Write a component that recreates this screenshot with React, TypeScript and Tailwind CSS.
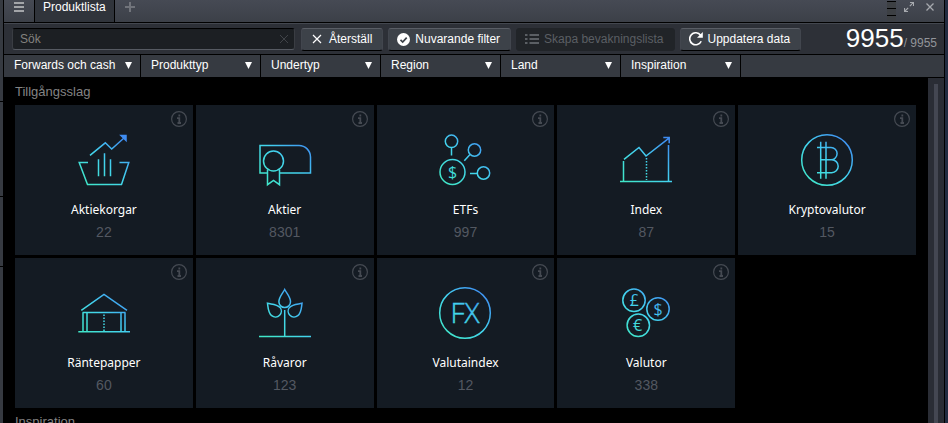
import { useState, type ReactNode } from "react";

const glyph = {
  fontFamily: '"Open Sans", "Noto Sans", sans-serif',
  fill: "url(#glow)",
  stroke: "none",
  textAnchor: "middle" as const,
};

const BasketIcon = (
  <>
    <path d="M14 24.3 29.3 11.8 35.7 18 48 7" />
    <path d="M45 4.5h5v5z" fill="url(#glow)" />
    <path d="M12 31.5H3.2l8.3 22h34l7.3-22h-9.3M22.5 28.3v17M28.5 22.3v23M34.5 28.3v17" />
  </>
);

const CertificateIcon = (
  <>
    <path d="M10.5 42H3V14.5h39a11.5 11.5 0 0 1 11.5 11.5v16H23" />
    <circle cx="16.5" cy="30" r="10" />
    <path d="M10.5 38.7v15l6-4.2 6 4.2v-15" />
  </>
);

const NetworkIcon = (
  <>
    <circle cx="15.5" cy="41" r="12.5" />
    <circle cx="14.5" cy="10.3" r="6.2" />
    <circle cx="37.5" cy="19" r="6.2" />
    <circle cx="46.5" cy="42" r="6.2" />
    <path d="M14.5 17v7.5M33 23.5l-5.7 6.3M33 42.5h7" />
    <text x="15.5" y="46.8" fontSize="16" style={glyph}>$</text>
  </>
);

const IndexIcon = (
  <>
    <path d="M2 50.5h52M5.5 30v20M50.5 14v36" />
    <path d="M6 28.3 21 16.5 28 25 51 7.2M45.3 6.5h5.9v5.8" />
    <path d="M28.5 27v22" strokeDasharray="1.5 1.5" />
  </>
);

const CryptoIcon = (
  <>
    <circle cx="28" cy="29" r="25.3" />
    <path d="M21.7 10.7v37M27 10.7v37M18 16.5h14a6.1 6.1 0 0 1 0 12.2H21.7M32 28.7h.7a6.5 6.5 0 0 1 0 13H18" />
  </>
);

const BankIcon = (
  <>
    <path d="M5.3 26.3 28 10.5 51 26.3" />
    <path d="M6.5 28.5h43M2.3 47.7H54M7 28.5v19M11 28.5v19M45 28.5v19M49 28.5v19" />
    <path d="M28 30.5v17" strokeDasharray="1.5 1.5" />
  </>
);

const PlantIcon = (
  <>
    <path d="M2 52.5h52M27.7 26v26" />
    <path d="M27.7 5.5c-2 4-5.8 7.5-5.8 12.3a5.8 5.8 0 0 0 11.6 0c0-4.8-3.8-8.3-5.8-12.3z" />
    <path d="M10.5 19.3c.6 4.5.6 9.5 4.2 12.4a5.9 5.9 0 0 0 8.3-8.3C19.8 20 15 20.3 10.5 19.3z" />
    <path d="M45 19.3c-.6 4.5-.6 9.5-4.2 12.4a5.9 5.9 0 0 1-8.3-8.3C35.7 20 40.5 20.3 45 19.3z" />
  </>
);

const FxIcon = (
  <>
    <circle cx="28" cy="29" r="25.3" />
    <text x="28" y="39.3" fontSize="28" fontWeight="300" style={{ ...glyph, stroke: "url(#glow)", strokeWidth: 0.4 }}>
      FX
    </text>
  </>
);

const CurrenciesIcon = (
  <>
    <circle cx="16" cy="16.3" r="11.2" />
    <circle cx="40" cy="25" r="11.2" />
    <circle cx="20.3" cy="41.3" r="11.2" />
    <text x="16.3" y="22" fontSize="16" style={glyph}>£</text>
    <text x="40" y="30.7" fontSize="16" style={glyph}>$</text>
    <text x="19.5" y="47" fontSize="16" style={glyph}>€</text>
  </>
);

const assets: { name: string; count: number; icon: ReactNode }[] = [
  { name: "Aktiekorgar", count: 22, icon: BasketIcon },
  { name: "Aktier", count: 8301, icon: CertificateIcon },
  { name: "ETFs", count: 997, icon: NetworkIcon },
  { name: "Index", count: 87, icon: IndexIcon },
  { name: "Kryptovalutor", count: 15, icon: CryptoIcon },
  { name: "Räntepapper", count: 60, icon: BankIcon },
  { name: "Råvaror", count: 123, icon: PlantIcon },
  { name: "Valutaindex", count: 12, icon: FxIcon },
  { name: "Valutor", count: 338, icon: CurrenciesIcon },
];

const filters = ["Forwards och cash", "Produkttyp", "Undertyp", "Region", "Land", "Inspiration"];

function AssetCard({ name, count, icon }: { name: string; count: number; icon: ReactNode }) {
  return (
    <li className="relative bg-[#141b23]">
      <button type="button" className="flex h-[150px] w-full flex-col items-center pt-[26px]">
        <svg
          className="size-14 shrink-0"
          viewBox="0 0 56 56"
          fill="none"
          stroke="url(#glow)"
          strokeWidth="1.5"
          aria-hidden="true"
        >
          {icon}
        </svg>
        <span className="mt-[15px] font-['Noto_Sans','Open_Sans',sans-serif] text-xs leading-4 text-white">{name}</span>
        <span className="mt-1 text-sm leading-5 text-[#535861]">{count}</span>
      </button>
      <button type="button" aria-label={`Om ${name}`} className="absolute top-1.5 right-1.5 size-4 text-[#454a52]">
        <svg viewBox="0 0 16 16" fill="none" stroke="currentColor" aria-hidden="true">
          <circle cx="8" cy="8" r="7.4" strokeWidth="1.2" />
          <path d="M8.3 3.5v2M6 7.2h2.3v5M6.5 12h3.5" strokeWidth="1.8" />
        </svg>
      </button>
    </li>
  );
}

function ToolButton({ icon, children, disabled }: { icon: ReactNode; children: ReactNode; disabled?: boolean }) {
  return (
    <button
      type="button"
      disabled={disabled}
      className="flex h-[23px] shrink-0 items-center gap-[5px] rounded-[3px] border border-t-[#5a5e66] border-x-[#42464e] border-b-black bg-[#3d4249] pr-2.5 pl-2 whitespace-nowrap text-white disabled:border-[#212428] disabled:bg-[#212428] disabled:text-[#5b5f64]"
    >
      {icon}
      {children}
    </button>
  );
}

export default function App() {
  const [query, setQuery] = useState("");

  return (
    <div className="flex h-screen overflow-hidden bg-black font-['Liberation_Sans',Arial,sans-serif] text-xs text-white">
      <svg className="absolute size-0" aria-hidden="true">
        <defs>
          <linearGradient id="glow" gradientUnits="userSpaceOnUse" x1="8" y1="52" x2="48" y2="8">
            <stop offset="0" stopColor="#40e6c8" />
            <stop offset="0.5" stopColor="#43d3ee" />
            <stop offset="1" stopColor="#3f8df2" />
          </linearGradient>
        </defs>
      </svg>

      <div className="mr-px flex w-[3px] shrink-0 flex-col gap-px">
        <div className="h-[101px] bg-[#363a41]" />
        <div className="h-[94px] bg-[#363a41]" />
        <div className="h-[69px] bg-[#363a41]" />
        <div className="flex-1 bg-[#363a41]" />
      </div>

      <section className="flex min-w-0 flex-1 flex-col">
        <header className="flex h-[23px] shrink-0 border-b border-black bg-linear-to-b from-[#464a54] to-[#3c4048]">
          <button type="button" aria-label="Meny" className="w-[31px] border-r border-black pb-2 pl-2.5 text-[#a3a5a9]">
            <svg className="size-2.5" viewBox="0 0 10 10" stroke="currentColor" strokeWidth="2" aria-hidden="true">
              <path d="M0 1h10M0 5h10M0 9h10" />
            </svg>
          </button>
          <button type="button" className="border-r border-black bg-[#30343b] px-2 pb-2 leading-3.5 text-white">
            Produktlista
          </button>
          <button type="button" aria-label="Ny flik" className="pb-2 pl-2.5 text-[#71747b]">
            <svg className="size-2.5" viewBox="0 0 10 10" stroke="currentColor" strokeWidth="2" aria-hidden="true">
              <path d="M0 5h10M5 0v10" />
            </svg>
          </button>
          <div className="ml-auto flex items-start gap-2 pr-2.5 text-[#a6a9ae]">
            <svg className="h-[21px] w-[9px]" viewBox="0 0 9 21" aria-hidden="true">
              <path d="M0 1h9v20H0z" fill="#3d4044" />
              <path d="M0 1.5h9M0 8.5h9M0 15.5h9" stroke="#000" />
            </svg>
            <button type="button" aria-label="Maximera" className="pt-0.5">
              <svg className="size-2.5" viewBox="0 0 10 10" fill="none" stroke="currentColor" strokeWidth="1.2" aria-hidden="true">
                <path d="M6 .5h3.5V4M9.5.5 5.8 4.2M4 9.5H.5V6M.5 9.5l3.7-3.7" />
              </svg>
            </button>
            <button type="button" aria-label="Stäng" className="pt-[3px] pl-1">
              <svg className="size-2" viewBox="0 0 8 8" stroke="currentColor" strokeWidth="1.3" aria-hidden="true">
                <path d="m.5.5 7 7m0-7-7 7" />
              </svg>
            </button>
          </div>
        </header>

        <div className="flex h-8 shrink-0 items-center gap-[5px] border-t border-b border-t-[#43474f] border-b-black bg-[#2d3037] pr-[7px] pl-2">
          <div className="relative mr-px h-[22px] w-[283px]">
            <input
              type="text"
              aria-label="Sök"
              placeholder="Sök"
              value={query}
              onChange={(event) => setQuery(event.target.value)}
              className="block h-full w-full rounded-[3px] border border-x-[#3a3d43] border-t-black border-b-[#565a62] bg-[#1c1f23] pr-6 pl-[7px] outline-none placeholder:text-[#83827f]"
            />
            <button
              type="button"
              aria-label="Rensa sökning"
              onClick={() => setQuery("")}
              className="absolute top-[7px] right-[7px] text-[#404348]"
            >
              <svg className="size-2" viewBox="0 0 8 8" stroke="currentColor" aria-hidden="true">
                <path d="m0 0 8 8m0-8-8 8" />
              </svg>
            </button>
          </div>
          <ToolButton
            icon={
              <svg className="mx-0.5 size-2.5" viewBox="0 0 10 10" stroke="currentColor" strokeWidth="1.2" aria-hidden="true">
                <path d="m1 1 8 8m0-8L1 9" />
              </svg>
            }
          >
            Återställ
          </ToolButton>
          <ToolButton
            icon={
              <svg className="size-[13px]" viewBox="0 0 13 13" fill="none" aria-hidden="true">
                <circle cx="6.5" cy="6.5" r="6.5" fill="currentColor" />
                <path d="M3.5 6.8 5.7 9l4-4.3" stroke="#3d4249" strokeWidth="1.7" />
              </svg>
            }
          >
            Nuvarande filter
          </ToolButton>
          <ToolButton
            disabled
            icon={
              <svg className="h-3 w-3.5" viewBox="0 0 14 12" stroke="currentColor" strokeWidth="2" aria-hidden="true">
                <path d="M0 2h2.5M4.5 2H14M0 6h2.5M4.5 6H14M0 10h2.5M4.5 10H14" />
              </svg>
            }
          >
            Skapa bevakningslista
          </ToolButton>
          <ToolButton
            icon={
              <svg className="size-3.5" viewBox="0 0 14 14" fill="none" stroke="currentColor" strokeWidth="1.6" aria-hidden="true">
                <path d="M12.2 9.2A6 6 0 1 1 11.6 3.3" />
                <path d="M13.8 0v5.8H8z" fill="currentColor" stroke="none" />
              </svg>
            }
          >
            Uppdatera data
          </ToolButton>
          <p className="ml-auto pt-0.5 leading-7 whitespace-nowrap text-[#92959a]">
            <span className="text-[26px] text-white">9955</span>/ 9955
          </p>
        </div>

        <div className="flex h-[22px] shrink-0 bg-[#363a41]">
          {filters.map((name) => (
            <div key={name} className="relative w-[120px] border-r border-black first:w-[137px]">
              <select
                aria-label={name}
                className="block h-5 w-full appearance-none bg-transparent pr-5 pl-2.5 text-white outline-none"
              >
                <option>{name}</option>
              </select>
              <svg
                className="pointer-events-none absolute top-[7px] right-2 size-[7px]"
                viewBox="0 0 7 7"
                fill="currentColor"
                aria-hidden="true"
              >
                <path d="M0 0h7L3.5 7z" />
              </svg>
            </div>
          ))}
        </div>

        <div className="flex min-h-0 flex-1">
          <main className="min-w-0 flex-1 overflow-hidden pr-3 pl-[11px]">
            <h2 className="pt-[7px] pb-[5px] text-[13px] leading-4 text-[#848484]">Tillgångsslag</h2>
            <ul className="grid grid-cols-5 gap-[3px]">
              {assets.map((asset) => (
                <AssetCard key={asset.name} {...asset} />
              ))}
            </ul>
            <h2 className="pt-1.5 text-[13px] leading-4 text-[#848484]">Inspiration</h2>
          </main>
          <div className="mt-px w-4 shrink-0 bg-[#2a2d35] px-1.5 pt-1.5">
            <div className="h-full w-1 bg-[#444752]" />
          </div>
        </div>
      </section>

      <div className="w-1 shrink-0 border-l border-black bg-[#222c41]" />
    </div>
  );
}
